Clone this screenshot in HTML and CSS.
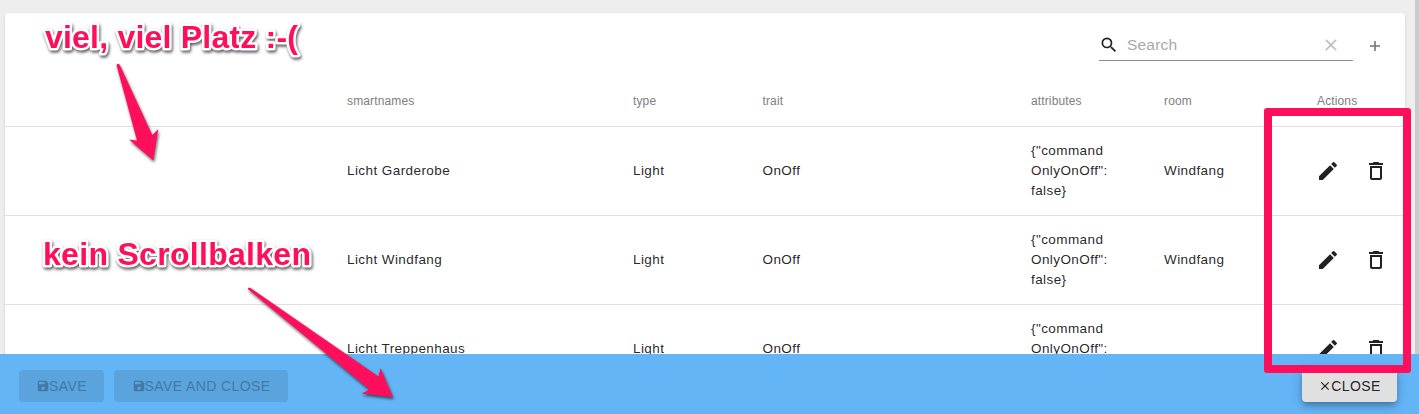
FILE: index.html
```
<!DOCTYPE html>
<html lang="de">
<head>
<meta charset="utf-8">
<title>Smartnames</title>
<link rel="stylesheet" href="styles.css">
</head>
<body>
<svg width="0" height="0" class="defs">
  <symbol id="edit" viewBox="0 0 24 24"><path d="M3 17.250V21h3.750L17.810 9.940l-3.750-3.750L3 17.250zM20.710 7.040a1 1 0 0 0 0-1.410l-2.340-2.340a1 1 0 0 0-1.410 0l-1.830 1.830 3.750 3.750 1.830-1.830z"/></symbol>
  <symbol id="trash" viewBox="0 0 24 24"><path d="M6 19c0 1.100.9 2 2 2h8c1.100 0 2-.9 2-2V7H6v12zM8 9h8v10H8V9zm7.500-5l-1-1h-5l-1 1H5v2h14V4z"/></symbol>
  <symbol id="search" viewBox="0 0 24 24"><path d="M15.500 14h-.79l-.28-.27A6.470 6.470 0 0 0 16 9.500 6.500 6.500 0 1 0 9.500 16c1.610 0 3.090-.59 4.230-1.570l.27.28v.79l5 4.990L20.490 19l-4.990-5zm-6 0C7.010 14 5 11.990 5 9.500S7.010 5 9.500 5 14 7.010 14 9.500 11.990 14 9.500 14z"/></symbol>
  <symbol id="clear" viewBox="0 0 24 24"><path d="M19 6.410L17.590 5 12 10.590 6.410 5 5 6.410 10.590 12 5 17.590 6.410 19 12 13.410 17.590 19 19 17.590 13.410 12z"/></symbol>
  <symbol id="save" viewBox="0 0 24 24"><path d="M17 3H5a2 2 0 0 0-2 2v14a2 2 0 0 0 2 2h14c1.100 0 2-.9 2-2V7l-4-4zm-5 16a3 3 0 1 1 0-6 3 3 0 0 1 0 6zm3-10H5V5h10v4z"/></symbol>
</svg>
<div class="page">
  <main class="content">
    <section class="card">
      <div class="toolbar">
        <div class="search">
          <svg class="search-icon"><use href="#search"/></svg>
          <span class="placeholder">Search</span>
          <svg class="clear-icon"><use href="#clear"/></svg>
        </div>
        <svg class="add-icon" viewBox="0 0 10 10"><path d="M4.200 0h1.600v4.200H10v1.600H5.800V10H4.200V5.800H0V4.200h4.200z"/></svg>
      </div>
      <div class="row head">
        <span></span><span>smartnames</span><span>type</span><span>trait</span><span>attributes</span><span>room</span><span>Actions</span>
      </div>
      <div class="row">
        <span></span><span>Licht Garderobe</span><span>Light</span><span>OnOff</span><span>{"command<br>OnlyOnOff":<br>false}</span><span>Windfang</span>
        <div class="actions"><svg><use href="#edit"/></svg><svg><use href="#trash"/></svg></div>
      </div>
      <div class="row">
        <span></span><span>Licht Windfang</span><span>Light</span><span>OnOff</span><span>{"command<br>OnlyOnOff":<br>false}</span><span>Windfang</span>
        <div class="actions"><svg><use href="#edit"/></svg><svg><use href="#trash"/></svg></div>
      </div>
      <div class="row">
        <span></span><span>Licht Treppenhaus</span><span>Light</span><span>OnOff</span><span>{"command<br>OnlyOnOff":<br>&nbsp;</span><span></span>
        <div class="actions"><svg><use href="#edit"/></svg><svg><use href="#trash"/></svg></div>
      </div>
    </section>
    <div class="scrollbar"></div>
  </main>
  <footer class="footer">
    <button class="btn disabled save"><svg><use href="#save"/></svg>SAVE</button>
    <button class="btn disabled save-close"><svg><use href="#save"/></svg>SAVE AND CLOSE</button>
    <button class="btn close"><svg><use href="#clear"/></svg>CLOSE</button>
  </footer>
</div>
<svg class="annotations" viewBox="0 0 1419 414">
  <g class="shape">
    <path d="M116.500 65Q118 62.500 119.800 65L152.300 135L158.300 129L153.300 160.500L129 139.500L137 140.500Z"/>
    <path d="M247.800 289Q248.500 286.500 250.500 288L378.500 376.500L380.500 368L393 397.300L361.500 393.500L369.500 389.500Z"/>
  </g>
  <path class="frame" fill-rule="evenodd" d="M1267 108H1408a3 3 0 0 1 3 3V370a3 3 0 0 1-3 3H1267a3 3 0 0 1-3-3V111a3 3 0 0 1 3-3zM1272 116V365H1403V116z"/>
  <g class="label">
    <text x="45" y="48" textLength="253">viel, viel Platz :-(</text>
    <text x="43" y="265" textLength="268">kein Scrollbalken</text>
  </g>
</svg>
</body>
</html>
```
FILE: styles.css
```
* { box-sizing: border-box; }
body {
  margin: 0;
  overflow: hidden;
  font-family: "Liberation Sans", Arial, sans-serif;
  color: rgba(0, 0, 0, .87);
}
svg { fill: currentColor; flex: none; }
.defs { display: block; height: 0; }
.page { display: flex; flex-direction: column; height: 414px; background: #eee; }
.content {
  display: flex;
  justify-content: space-between;
  height: 354px;
  padding: 13px 0 0 5px;
  overflow: hidden;
}
.card {
  width: 1400px;
  height: 420px;
  background: #fff;
  border-radius: 4px;
  box-shadow: 0 2px 1px -1px rgba(0,0,0,.2), 0 1px 1px rgba(0,0,0,.14), 0 1px 3px rgba(0,0,0,.12);
}
.scrollbar { width: 4px; height: 354px; margin-top: -13px; background: #cbcbcb; }
.toolbar { display: flex; justify-content: flex-end; height: 64px; padding: 16px 25px 0 0; }
.search {
  display: flex;
  align-items: center;
  width: 254px;
  height: 32px;
  border-bottom: 1px solid #8c8c8c;
}
.search-icon { width: 20px; height: 20px; }
.placeholder { flex: 1; padding-left: 8px; font-size: 15.500px; letter-spacing: .2px; color: #a8a8a8; }
.clear-icon { width: 20px; height: 20px; margin-right: 12px; color: #bdbdbd; }
.add-icon { width: 10px; height: 10px; margin: 12px 0 0 17px; color: #757575; }
.row {
  display: grid;
  grid-template-columns: 342px 286px 129.500px 268.500px 133px 144px 1fr;
  align-items: center;
  height: 89px;
  border-bottom: 1px solid #e0e0e0;
  font-size: 13.500px;
  line-height: 20px;
  letter-spacing: .42px;
}
.head {
  height: 50px;
  padding-bottom: 2px;
  font-size: 12px;
  letter-spacing: .13px;
  color: #808080;
}
.head span:last-child { padding-left: 9px; }
.actions { display: flex; gap: 24px; padding-left: 8px; }
.actions svg { width: 24px; height: 24px; }
.footer { display: flex; height: 60px; padding: 16px 22px 0 19px; background: #64b5f6; }
.btn {
  display: flex;
  align-items: center;
  justify-content: center;
  height: 32px;
  padding: 0;
  border: 0;
  border-radius: 4px;
  font: 14px "Liberation Sans", Arial, sans-serif;
  letter-spacing: .4px;
}
.btn svg { width: 14px; height: 14px; margin-right: -1px; }
.disabled { background: #5aa3dd; color: #427aa6; }
.save { width: 85px; margin-right: 10px; }
.save-close { width: 174px; }
.close {
  width: 95px;
  margin-left: auto;
  background: #e0e0e0;
  color: rgba(0, 0, 0, .87);
  box-shadow: 0 3px 5px -1px rgba(0,0,0,.2), 0 5px 8px rgba(0,0,0,.14), 0 1px 14px rgba(0,0,0,.12);
}
.annotations { position: absolute; left: 0; top: 0; width: 1419px; height: 414px; fill: #ff0f5b; }
.shape { filter: drop-shadow(1px 2px 1.500px rgba(0, 0, 0, .6)); }
.label {
  font: bold 32px "Liberation Sans", Arial, sans-serif;
  stroke: #fff;
  stroke-width: 5px;
  stroke-linejoin: round;
  paint-order: stroke;
  filter: drop-shadow(1px 2px 1.500px rgba(0, 0, 0, .65));
}
```
